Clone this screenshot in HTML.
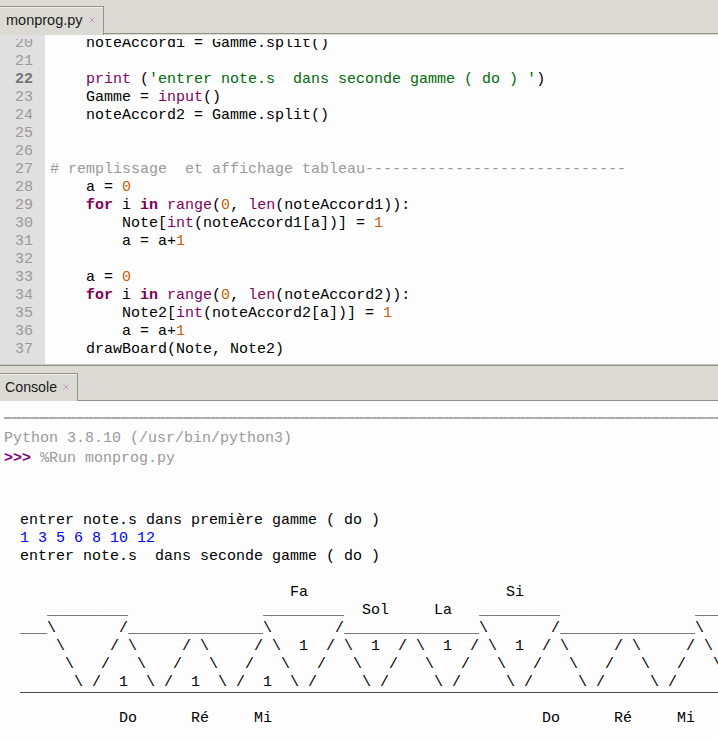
<!DOCTYPE html>
<html><head><meta charset="utf-8">
<style>
html,body{margin:0;padding:0;}
body{width:718px;height:741px;overflow:hidden;position:relative;background:#fdfdfd;font-family:"Liberation Mono",monospace;}
.bar{position:absolute;left:0;width:718px;background:#dcdad5;}
.tab{position:absolute;background:#dcdad5;border:1px solid #938f89;box-shadow:inset 0 1px 0 #f1f0ed;border-bottom:none;box-sizing:border-box;font-family:"Liberation Sans",sans-serif;color:#1a1a1a;}
.tab .x{position:absolute;color:#c8a2c8;font-size:11px;}
.gut{position:absolute;left:0;top:35px;width:45px;height:330px;background:#e0e0e0;overflow:hidden;}
.edit{position:absolute;left:45px;top:35px;width:673px;height:330px;background:#fdfdfd;overflow:hidden;}
.cl{position:absolute;left:5px;white-space:pre;font-size:15px;line-height:18px;color:#000;}
.ln{position:absolute;right:12px;white-space:pre;font-size:15px;line-height:18px;color:#999;text-align:right;}
.ln.cur{color:#777;font-weight:bold;}
.kw{color:#7f0055;font-weight:bold;}
.bi{color:#800060;}
.nu{color:#c65d09;}
.st{color:#00690a;}
.cm{color:#9a9a9a;}
.clip{position:absolute;top:39px;height:326px;overflow:hidden;}
.con{position:absolute;left:0;top:401px;width:718px;height:340px;background:#fdfdfd;overflow:hidden;}
.co{position:absolute;left:20px;white-space:pre;font-size:15px;line-height:18px;color:#000;}
.co.inp{color:#0000ff;}
.sep{position:absolute;left:4px;right:0;height:1px;background:#bbb;}
.gray{position:absolute;white-space:pre;font-size:15px;line-height:20px;color:#999;}
.prompt{color:#7f007f;font-weight:bold;}
</style></head><body>
<div class="bar" style="top:0;height:35px;"></div>
<div style="position:absolute;left:0;top:33px;width:718px;height:1px;background:#938f89;"></div>
<div class="tab" style="left:-1px;top:6px;width:105px;height:29px;">
  <span style="position:absolute;left:6px;top:5px;font-size:14.5px;">monprog.py</span>
  <svg style="position:absolute;left:89px;top:10px;" width="6" height="6" viewBox="0 0 6 6"><path d="M0.5 0.5L5.5 5.5M5.5 0.5L0.5 5.5" stroke="#c79ad0" stroke-width="1" fill="none"/></svg>
</div>
<div class="gut"></div><div class="edit"></div>
<div class="clip" style="left:0;width:45px;"><div class="ln" style="margin-top:-39px;top:34.6px">20</div><div class="ln" style="margin-top:-39px;top:52.6px">21</div><div class="ln cur" style="margin-top:-39px;top:70.6px">22</div><div class="ln" style="margin-top:-39px;top:88.6px">23</div><div class="ln" style="margin-top:-39px;top:106.6px">24</div><div class="ln" style="margin-top:-39px;top:124.6px">25</div><div class="ln" style="margin-top:-39px;top:142.6px">26</div><div class="ln" style="margin-top:-39px;top:160.6px">27</div><div class="ln" style="margin-top:-39px;top:178.6px">28</div><div class="ln" style="margin-top:-39px;top:196.6px">29</div><div class="ln" style="margin-top:-39px;top:214.6px">30</div><div class="ln" style="margin-top:-39px;top:232.6px">31</div><div class="ln" style="margin-top:-39px;top:250.6px">32</div><div class="ln" style="margin-top:-39px;top:268.6px">33</div><div class="ln" style="margin-top:-39px;top:286.6px">34</div><div class="ln" style="margin-top:-39px;top:304.6px">35</div><div class="ln" style="margin-top:-39px;top:322.6px">36</div><div class="ln" style="margin-top:-39px;top:340.6px">37</div></div>
<div class="clip" style="left:45px;width:673px;"><div class="cl" style="margin-top:-39px;top:34.6px">    noteAccord1 = Gamme.split()</div><div class="cl" style="margin-top:-39px;top:52.6px"></div><div class="cl" style="margin-top:-39px;top:70.6px">    <span class="bi">print</span> (<span class="st">&#x27;entrer note.s  dans seconde gamme ( do ) &#x27;</span>)</div><div class="cl" style="margin-top:-39px;top:88.6px">    Gamme = <span class="bi">input</span>()</div><div class="cl" style="margin-top:-39px;top:106.6px">    noteAccord2 = Gamme.split()</div><div class="cl" style="margin-top:-39px;top:124.6px"></div><div class="cl" style="margin-top:-39px;top:142.6px"></div><div class="cl" style="margin-top:-39px;top:160.6px"><span class="cm"># remplissage  et affichage tableau-----------------------------</span></div><div class="cl" style="margin-top:-39px;top:178.6px">    a = <span class="nu">0</span></div><div class="cl" style="margin-top:-39px;top:196.6px">    <span class="kw">for</span> i <span class="kw">in</span> <span class="bi">range</span>(<span class="nu">0</span>, <span class="bi">len</span>(noteAccord1)):</div><div class="cl" style="margin-top:-39px;top:214.6px">        Note[<span class="bi">int</span>(noteAccord1[a])] = <span class="nu">1</span></div><div class="cl" style="margin-top:-39px;top:232.6px">        a = a+<span class="nu">1</span></div><div class="cl" style="margin-top:-39px;top:250.6px"></div><div class="cl" style="margin-top:-39px;top:268.6px">    a = <span class="nu">0</span></div><div class="cl" style="margin-top:-39px;top:286.6px">    <span class="kw">for</span> i <span class="kw">in</span> <span class="bi">range</span>(<span class="nu">0</span>, <span class="bi">len</span>(noteAccord2)):</div><div class="cl" style="margin-top:-39px;top:304.6px">        Note2[<span class="bi">int</span>(noteAccord2[a])] = <span class="nu">1</span></div><div class="cl" style="margin-top:-39px;top:322.6px">        a = a+<span class="nu">1</span></div><div class="cl" style="margin-top:-39px;top:340.6px">    drawBoard(Note, Note2)</div></div>
<div class="bar" style="top:365px;height:36px;"></div>
<div style="position:absolute;left:0;top:364px;width:718px;height:1px;background:#c9c6c0;"></div><div style="position:absolute;left:0;top:365px;width:718px;height:1px;background:#938f89;"></div>
<div style="position:absolute;left:0;top:400px;width:718px;height:1px;background:#938f89;"></div>
<div class="tab" style="left:-1px;top:373px;width:79px;height:28px;">
  <span style="position:absolute;left:5px;top:5px;font-size:14.2px;">Console</span>
  <svg style="position:absolute;left:63px;top:10px;" width="6" height="6" viewBox="0 0 6 6"><path d="M0.5 0.5L5.5 5.5M5.5 0.5L0.5 5.5" stroke="#c79ad0" stroke-width="1" fill="none"/></svg>
</div>
<div class="con">
<div class="sep" style="top:16px;height:2px;background:repeating-linear-gradient(to right,#a9a9a9 0,#a9a9a9 8px,#c6c6c6 8px,#c6c6c6 9px);"></div>
<div class="gray" style="left:4px;top:27.6px;">Python 3.8.10 (/usr/bin/python3)</div>
<div class="gray" style="left:4px;top:48.0px;"><span class="prompt">&gt;&gt;&gt;</span> %Run monprog.py</div>
<div class="co out" style="margin-top:-401px;top:512.2px">entrer note.s dans première gamme ( do )</div><div class="co inp" style="margin-top:-401px;top:530.2px">1 3 5 6 8 10 12</div><div class="co out" style="margin-top:-401px;top:548.2px">entrer note.s  dans seconde gamme ( do )</div><div class="co out" style="margin-top:-401px;top:584.2px">                              Fa                      Si</div><div class="co out" style="margin-top:-401px;top:602.2px">   _________               _________  Sol     La   _________               _____</div><div class="co out" style="margin-top:-401px;top:620.2px">___\       /_______________\       /_______________\       /_______________\</div><div class="co out" style="margin-top:-401px;top:638.2px">    \     / \     / \     / \  1  / \  1  / \  1  / \  1  / \     / \     / \</div><div class="co out" style="margin-top:-401px;top:656.2px">     \   /   \   /   \   /   \   /   \   /   \   /   \   /   \   /   \   /   \</div><div class="co out" style="margin-top:-401px;top:674.2px">      \ /  1  \ /  1  \ /  1  \ /     \ /     \ /     \ /     \ /     \ /     \</div><div class="co out" style="margin-top:-401px;top:710.2px">           Do      Ré     Mi                              Do      Ré     Mi</div>
<div style="position:absolute;left:20px;right:0;top:291px;height:1px;background:#4a4a4a;"></div>
</div>
</body></html>
